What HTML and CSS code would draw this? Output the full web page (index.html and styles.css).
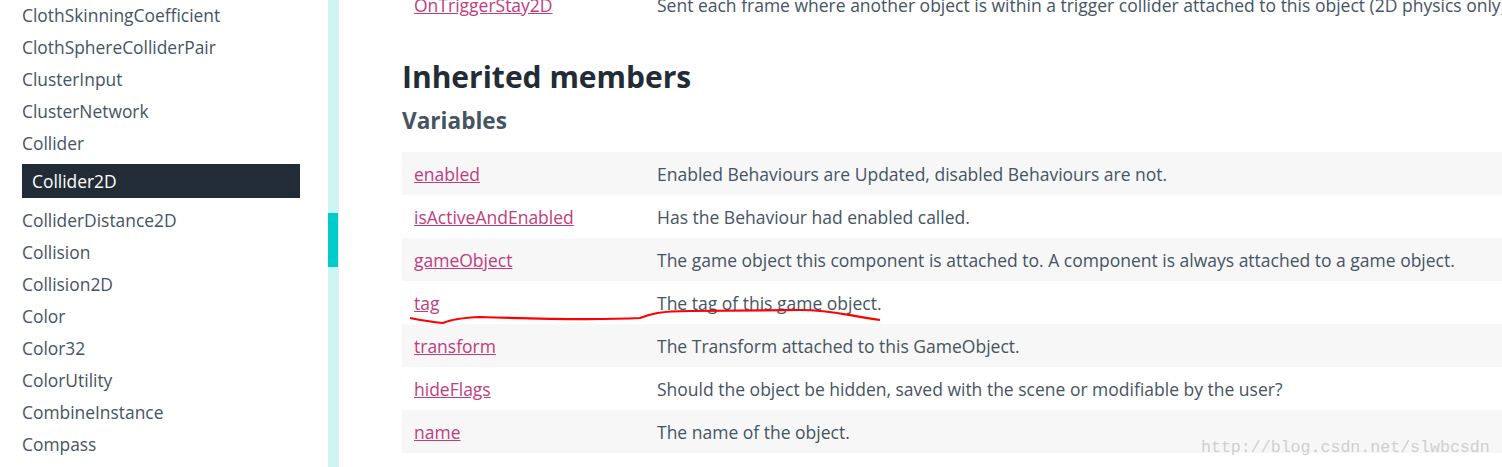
FILE: index.html
```html
<!DOCTYPE html>
<html lang="en">
<head>
    <meta charset="UTF-8">
    <title>Collider2D - Scripting API</title>
    <link rel="stylesheet" href="styles.css">
</head>
<body>
    <nav class="sidebar">
        <ul class="toc">
            <li>ClothSkinningCoefficient</li>
            <li>ClothSphereColliderPair</li>
            <li>ClusterInput</li>
            <li>ClusterNetwork</li>
            <li>Collider</li>
            <li class="selected">Collider2D</li>
            <li>ColliderDistance2D</li>
            <li>Collision</li>
            <li>Collision2D</li>
            <li>Color</li>
            <li>Color32</li>
            <li>ColorUtility</li>
            <li>CombineInstance</li>
            <li>Compass</li>
        </ul>
    </nav>
    <div class="scrollbar"><div class="thumb"></div></div>

    <main class="content">
        <table class="members">
            <tr>
                <td class="lbl"><a href="#">OnTriggerStay2D</a></td>
                <td class="desc">Sent each frame where another object is within a trigger collider attached to this object (2D physics only).</td>
            </tr>
        </table>

        <h2>Inherited members</h2>
        <h3>Variables</h3>
        <table class="members striped">
            <tr>
                <td class="lbl"><a href="#">enabled</a></td>
                <td class="desc">Enabled Behaviours are Updated, disabled Behaviours are not.</td>
            </tr>
            <tr>
                <td class="lbl"><a href="#">isActiveAndEnabled</a></td>
                <td class="desc">Has the Behaviour had enabled called.</td>
            </tr>
            <tr>
                <td class="lbl"><a href="#">gameObject</a></td>
                <td class="desc">The game object this component is attached to. A component is always attached to a game object.</td>
            </tr>
            <tr>
                <td class="lbl"><a href="#">tag</a></td>
                <td class="desc">The tag of this game object.</td>
            </tr>
            <tr>
                <td class="lbl"><a href="#">transform</a></td>
                <td class="desc">The Transform attached to this GameObject.</td>
            </tr>
            <tr>
                <td class="lbl"><a href="#">hideFlags</a></td>
                <td class="desc">Should the object be hidden, saved with the scene or modifiable by the user?</td>
            </tr>
            <tr>
                <td class="lbl"><a href="#">name</a></td>
                <td class="desc">The name of the object.</td>
            </tr>
        </table>
    </main>

    <!-- hand-drawn annotation on the screenshot -->
    <svg class="scribble" width="1502" height="467" viewBox="0 0 1502 467">
        <path d="M410 318 C420 320, 432 322, 443 323 C450 320, 458 318, 480 317 C540 319, 600 320, 640 318 C650 314, 660 311, 690 311 L800 310 C830 310, 845 315, 880 320" fill="none" stroke="#ff0000" stroke-width="2.2"/>
    </svg>
    <div class="watermark">http://blog.csdn.net/slwbcsdn</div>
</body>
</html>
```

FILE: styles.css
```css
body {
    font-family: 'Open Sans', 'Noto Sans', sans-serif;
    margin: 0;
    padding: 0;
    display: flex;
    height: 467px;
    overflow: hidden;
    background-color: #ffffff;
    color: #455463;
}

.sidebar {
    width: 328px;
    flex-shrink: 0;
}

.toc {
    list-style: none;
    margin: 0;
    padding: 0 28px 0 22px;
    font-size: 17.4px;
    line-height: 32px;
}

.toc li {
    height: 32px;
}

.toc li:first-child {
    margin-top: -1px;
}

.toc li.selected {
    background-color: #222c37;
    color: #ffffff;
    height: 34px;
    line-height: 34px;
    padding-left: 10px;
    margin: 5px 0 6px;
}

.scrollbar {
    width: 10px;
    flex-shrink: 0;
    background-color: #ccf5f3;
    border-right: 1px solid #e4ecec;
}

.thumb {
    margin-top: 213px;
    height: 54px;
    background-color: #00cccc;
}

.content {
    flex: 1;
    padding-left: 63px;
    margin-top: -17px;
    min-width: 0;
}

.members {
    border-collapse: collapse;
    table-layout: fixed;
    width: 1100px;
    font-size: 17.5px;
}

.members td {
    height: 43px;
    padding: 0 12px;
    vertical-align: middle;
    white-space: nowrap;
}

.members td.lbl {
    width: 219px;
}

.striped tr:nth-child(odd) {
    background-color: #f7f7f7;
}

.members a {
    color: #c03c7e;
    text-decoration: underline;
}

h2 {
    font-size: 30px;
    font-weight: bold;
    color: #222c37;
    margin: 31px 0 0;
    line-height: 40px;
}

h3 {
    font-size: 22.6px;
    font-weight: bold;
    color: #455463;
    margin: 8px 0 0;
    line-height: 32px;
    padding-bottom: 15px;
}

.scribble {
    position: absolute;
    top: 0;
    left: 0;
    pointer-events: none;
}

.watermark {
    position: absolute;
    left: 1201px;
    top: 438px;
    font-family: 'Liberation Mono', monospace;
    font-size: 16.6px;
    color: #cfcfcf;
}
```
